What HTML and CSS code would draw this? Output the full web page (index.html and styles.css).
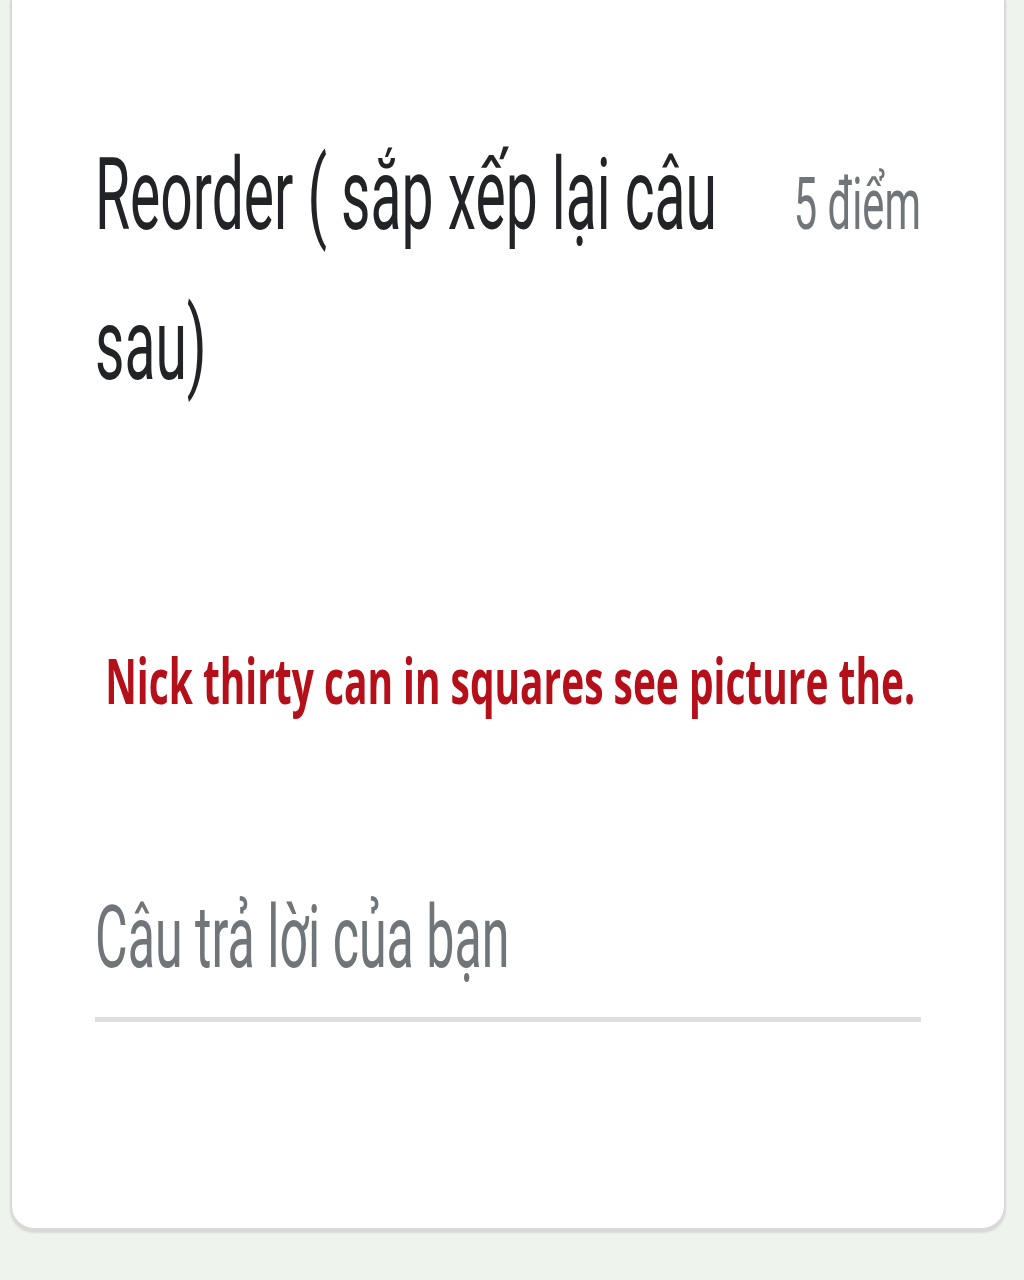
FILE: index.html
```html
<!DOCTYPE html>
<html lang="vi">
<head>
<meta charset="utf-8">
<title>Reorder</title>
<link rel="stylesheet" href="styles.css">
</head>
<body>
<div class="card">
  <div class="squeeze">
    <div class="question-head">
      <div class="question-title">Reorder ( sắp xếp lại câu sau)</div>
      <div class="points">5 điểm</div>
    </div>
    <div class="prompt"><span class="prompt-text">Nick thirty can in squares see picture the.</span></div>
    <div class="answer">Câu trả lời của bạn</div>
  </div>
</div>
</body>
</html>
```
FILE: styles.css
```css
html, body {
  margin: 0;
  padding: 0;
  background: #eff3ee;
}
body {
  width: 1024px;
  height: 1280px;
  overflow: hidden;
  font-family: Roboto, "Liberation Sans", Arial, sans-serif;
}
.card {
  margin: 0 18px 0 10px;
  background: #ffffff;
  border: 2px solid #d9d9d9;
  border-top: none;
  border-radius: 0 0 24px 24px;
  box-shadow: 0 3px 2px rgba(0, 0, 0, 0.10);
  padding: 120px 0 206px 83px;
  overflow: hidden;
}
.squeeze {
  width: 1449px;
  transform: scaleX(0.57);
  transform-origin: 0 0;
}
.question-head {
  display: flex;
  align-items: baseline;
  justify-content: space-between;
  gap: 40px;
}
.question-title {
  flex: 1;
  font-size: 100px;
  line-height: 150px;
  color: #222326;
}
.points {
  font-size: 73px;
  line-height: 150px;
  color: #70757a;
  white-space: nowrap;
}
.prompt {
  margin-top: 220px;
  padding-left: 18px;
  height: 80px;
  white-space: nowrap;
}
.prompt-text {
  display: inline-block;
  font-family: "Open Sans", "Noto Sans", sans-serif;
  font-weight: 700;
  font-size: 62px;
  line-height: 80px;
  color: #b50f19;
  transform: scaleX(1.10);
  transform-origin: 0 0;
}
.answer {
  margin-top: 164px;
  font-size: 88px;
  line-height: 106px;
  color: #70757a;
  padding-bottom: 27px;
  border-bottom: 5px solid #dedede;
}
```
